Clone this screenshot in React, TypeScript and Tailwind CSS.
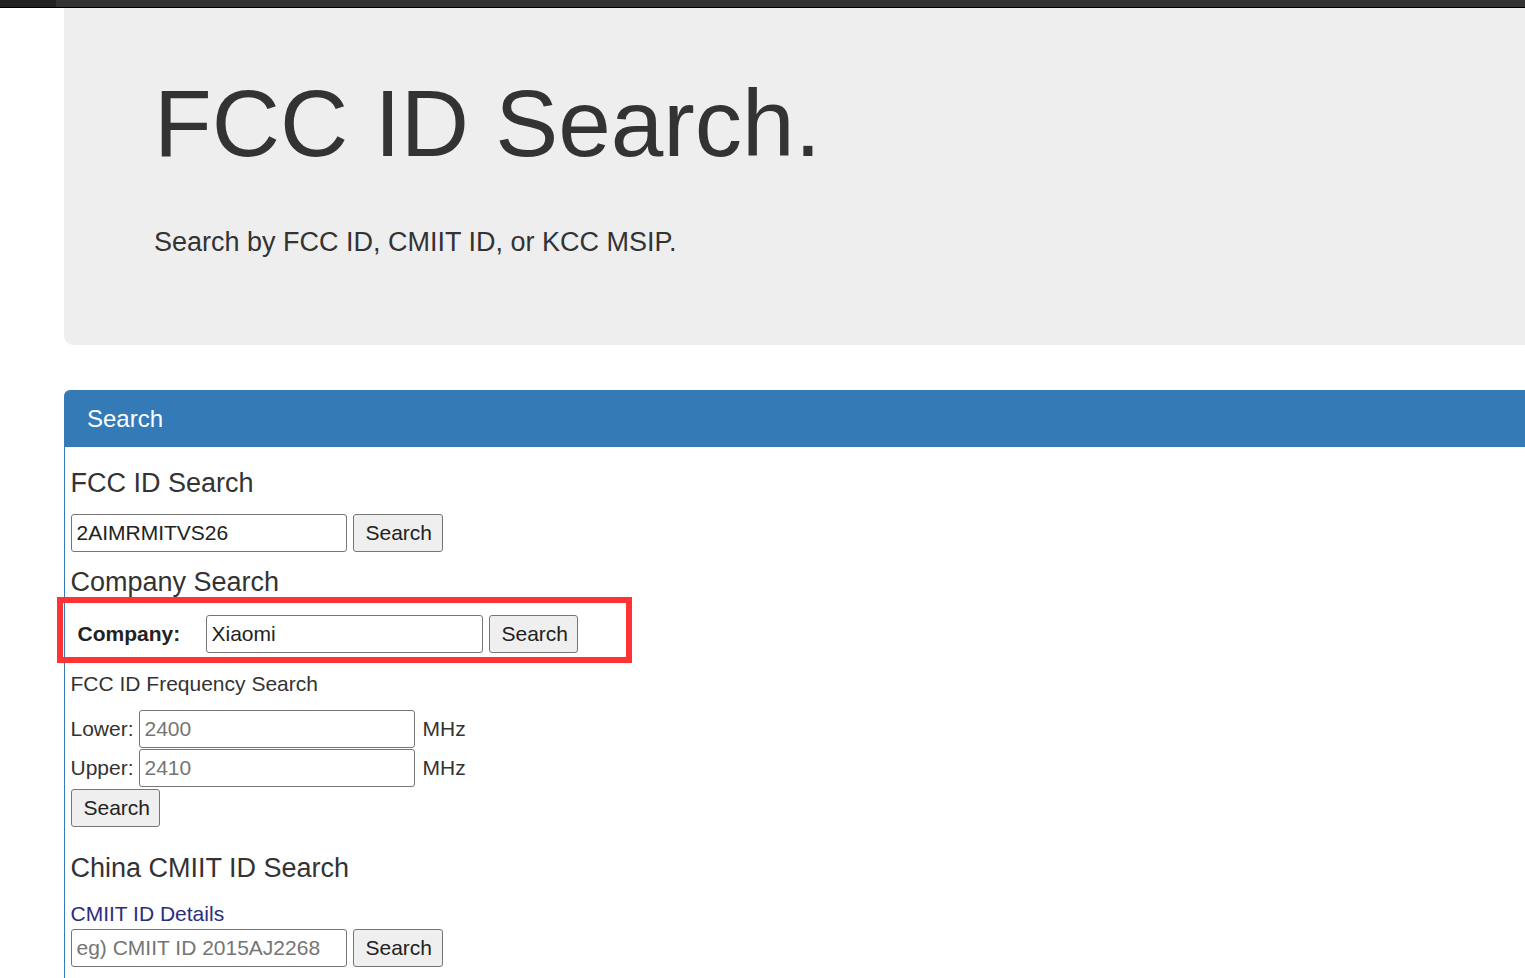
import React from "react"

const inputCls =
  "box-border h-[38px] w-[276px] rounded-[3px] border border-[#767676] bg-white px-[5px] text-[21px] text-[#222] placeholder:text-[#757575] outline-none"
const buttonCls =
  "box-border h-[38px] rounded-[3px] border border-[#767676] bg-[#efefef] px-[12px] text-[21px] text-[#222]"

const SearchButton = ({ className = "" }: { className?: string }) => (
  <button type="button" className={`${buttonCls} ${className}`}>
    Search
  </button>
)

export default function App() {
  return (
    <div className="min-h-screen bg-white text-[#333]" style={{ fontFamily: '"Liberation Sans", Arial, sans-serif' }}>
      {/* top nav strip */}
      <div className="flex h-[8px] border-b border-black">
        <div className="w-[56px] bg-[#222]" />
        <div className="flex-1 bg-[#333]" />
      </div>

      <div className="pl-[64px]">
        {/* jumbotron */}
        <div className="rounded-bl-[9px] bg-[#eee] pt-[63px] pb-[83px] pl-[90px]">
          <h1 className="text-[94.5px] leading-[104px] font-normal">FCC ID Search.</h1>
          <p className="mt-[47px] text-[27px] leading-[40px]">Search by FCC ID, CMIIT ID, or KCC MSIP.</p>
        </div>

        {/* search panel */}
        <div className="mt-[45px]">
          <div className="flex h-[57px] items-center rounded-tl-[6px] bg-[#337ab7] px-[23px]">
            <span className="text-[24px] leading-[26px] text-white">Search</span>
          </div>

          <div className="border-l-[1.5px] border-[#337ab7] pl-[5.5px] pt-[21px] pb-[12px]">
            <h3 className="text-[27px] leading-[30px]">FCC ID Search</h3>
            <div className="mt-[16px] flex gap-[6px]">
              <input className={inputCls} defaultValue="2AIMRMITVS26" />
              <SearchButton className="w-[90px]" />
            </div>

            <h3 className="mt-[15px] text-[27px] leading-[30px]">Company Search</h3>
            <div className="relative flex items-center pt-[18px] pb-[10px] pl-[7px]">
              <label className="w-[128px] text-[21px] font-bold text-[#222]">Company:</label>
              <input className={`${inputCls} w-[277px]`} defaultValue="Xiaomi" />
              <SearchButton className="ml-[6px] w-[89px]" />
              <div className="pointer-events-none absolute top-0 bottom-0 left-[-14px] w-[575px] border-[6px] border-[#f33]" />
            </div>

            <div className="mt-[6px] text-[21px] leading-[30px]">FCC ID Frequency Search</div>
            <div className="mt-[11px] flex flex-col gap-[1px] text-[21px]">
              <div className="flex items-center">
                <span className="w-[68px]">Lower:</span>
                <input className={inputCls} placeholder="2400" />
                <span className="ml-[8px]">MHz</span>
              </div>
              <div className="flex items-center">
                <span className="w-[68px]">Upper:</span>
                <input className={inputCls} placeholder="2410" />
                <span className="ml-[8px]">MHz</span>
              </div>
              <div className="mt-[1px]">
                <SearchButton className="h-[37px] w-[89px]" />
              </div>
            </div>

            <h3 className="mt-[26px] text-[27px] leading-[30px]">China CMIIT ID Search</h3>
            <a href="#" className="mt-[16px] block text-[21px] leading-[30px] text-[#2b2d7f]">
              CMIIT ID Details
            </a>
            <div className="flex gap-[6px]">
              <input className={inputCls} placeholder="eg) CMIIT ID 2015AJ2268" />
              <SearchButton className="w-[90px]" />
            </div>
          </div>
        </div>
      </div>
    </div>
  )
}
